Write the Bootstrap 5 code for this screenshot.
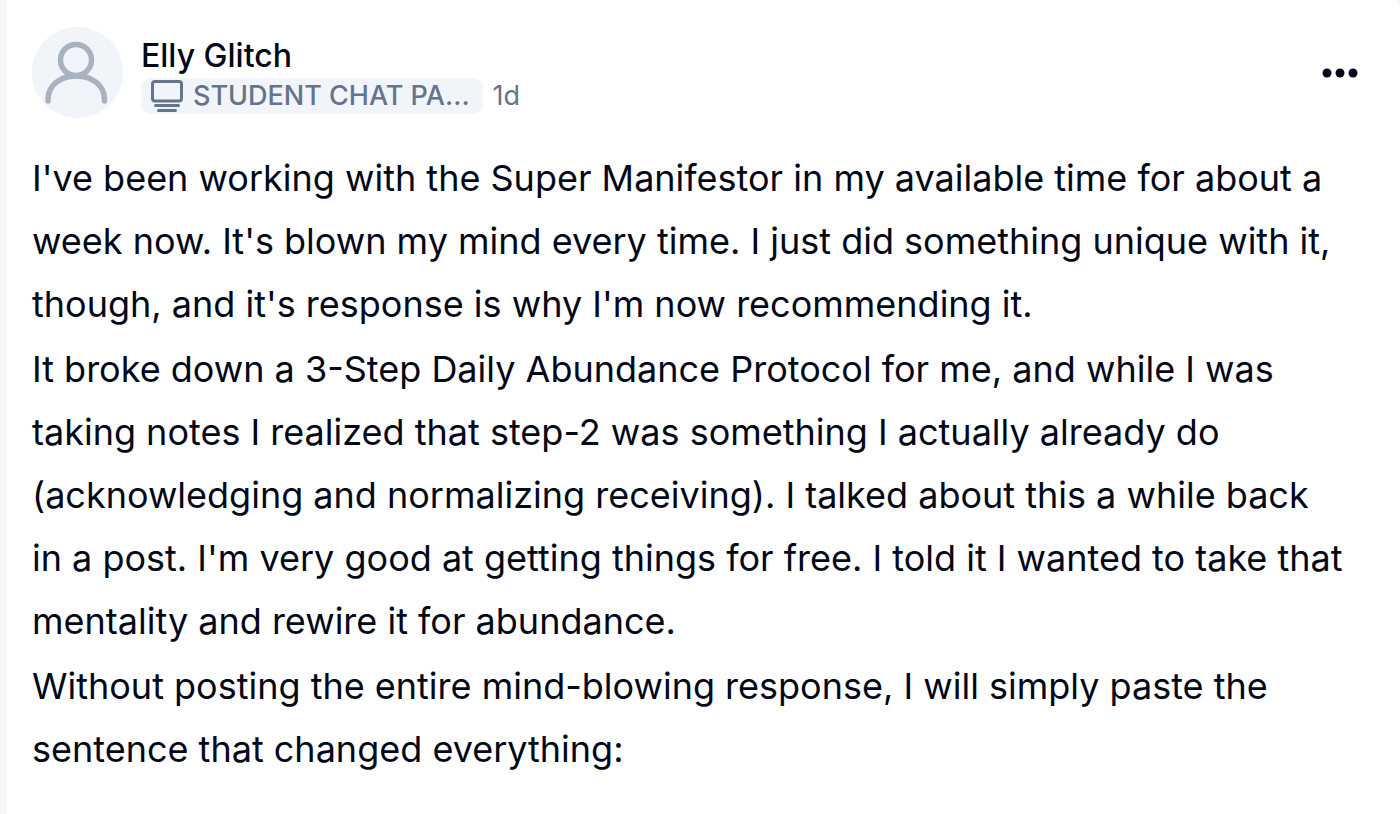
<!DOCTYPE html>
<html lang="en">
<head>
<meta charset="utf-8">
<meta name="viewport" content="width=device-width, initial-scale=1">
<title>Elly Glitch</title>
<link href="https://cdn.jsdelivr.net/npm/bootstrap@5.3.0/dist/css/bootstrap.min.css" rel="stylesheet">
<style>
  body { font-family: Inter, "Liberation Sans", sans-serif; background: #f7f7f8; color: #020817; }
  .page-side { background: #f5f8fc; margin-left: 7px; }
  .post { background: #fff; padding: 27px 34px 32px 25px; border-top-right-radius: 8px 11px; min-height: 100vh; }
  .avatar { width: 91px; height: 91px; background: #f1f5f9; }
  .author-block { margin-left: 18px; padding-top: 7px; }
  .author { font-size: 32px; line-height: 43px; font-weight: 500; color: inherit; }
  .space-tag { height: 36px; padding: 0 13px 0 9px; border-radius: 10px; background: #f1f5f9; }
  .meta-text { font-size: 27px; line-height: 38px; color: #64748b; }
  .meta-row { gap: 10px; }
  .menu-btn { width: 36px; height: 48px; }
  .post-text { font-size: 36px; line-height: 63px; margin-top: 29px; padding-right: 20px; }
  .post-text p { margin-bottom: 2px; }
</style>
</head>
<body>
<div class="page-side">
<article class="post">
  <header class="d-flex align-items-center">
    <div class="avatar rounded-circle overflow-hidden flex-shrink-0">
      <svg class="d-block" width="91" height="91" viewBox="0 0 91 91" fill="none" stroke="#a9b2c0" stroke-width="5.5" aria-hidden="true"><circle cx="44" cy="33" r="15.5"/><path d="M16 74V72.500C16 59 27.500 49 44.200 49S72.500 59 72.500 72.500V74" stroke-linecap="round"/></svg>
    </div>
    <div class="author-block align-self-start">
      <a href="#" class="author d-block text-decoration-none">Elly Glitch</a>
      <div class="d-flex align-items-center meta-row meta-text">
        <a href="#" class="space-tag meta-text d-flex align-items-center gap-2 text-decoration-none fw-medium">
          <svg width="35" height="34" viewBox="0 0 35 34" fill="none" stroke="#64748b" stroke-linecap="round" aria-hidden="true"><rect x="2.500" y="2.500" width="29" height="19.500" rx="2.500" stroke-width="3"/><path d="M5.500 26.500H28.500M8.500 31.500H25.500" stroke-width="3"/></svg>
          <span>STUDENT CHAT PA...</span>
        </a>
        <time>1d</time>
      </div>
    </div>
    <button type="button" class="menu-btn btn p-0 border-0 ms-auto me-2 d-flex align-items-center" aria-label="More options">
      <svg width="36" height="10" viewBox="0 0 36 10" fill="#020817" aria-hidden="true"><circle cx="5" cy="5" r="4.500"/><circle cx="18" cy="5" r="4.500"/><circle cx="31" cy="5" r="4.500"/></svg>
    </button>
  </header>
  <div class="post-text">
    <p>I've been working with the Super Manifestor in my available time for about a week now. It's blown my mind every time. I just did something unique with it, though, and it's response is why I'm now recommending it.</p>
    <p>It broke down a 3-Step Daily Abundance Protocol for me, and while I was taking notes I realized that step-2 was something I actually already do (acknowledging and normalizing receiving). I talked about this a while back in a post. I'm very good at getting things for free. I told it I wanted to take that mentality and rewire it for abundance.</p>
    <p>Without posting the entire mind-blowing response, I will simply paste the sentence that changed everything:</p>
  </div>
</article>
</div>
<script src="https://cdn.jsdelivr.net/npm/bootstrap@5.3.0/dist/js/bootstrap.bundle.min.js"></script>
</body>
</html>
